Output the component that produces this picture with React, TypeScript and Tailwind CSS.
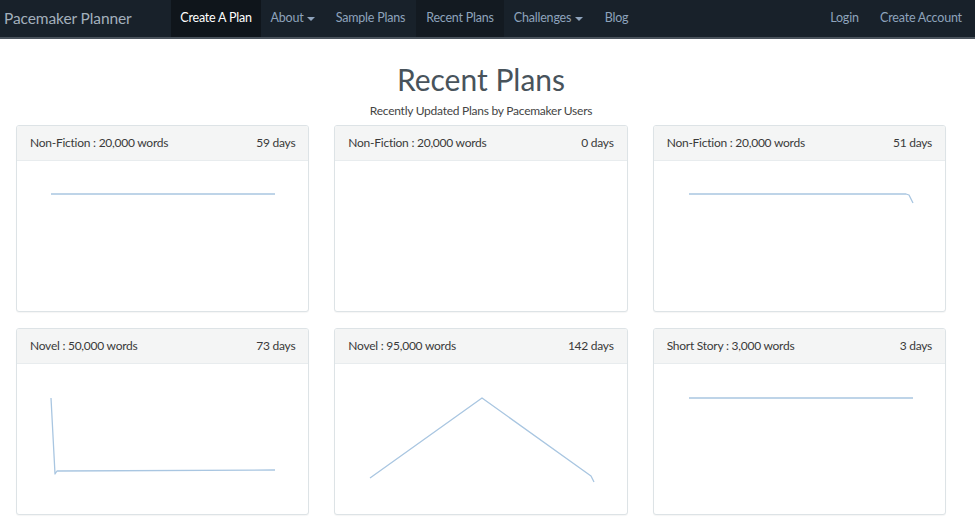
type Plan = {
  title: string;
  days: string;
  points: string;
};

const plans: Plan[] = [
  { title: 'Non-Fiction : 20,000 words', days: '59 days', points: '34,33 258,33' },
  { title: 'Non-Fiction : 20,000 words', days: '0 days', points: '' },
  { title: 'Non-Fiction : 20,000 words', days: '51 days', points: '35,33 252,33 255,34 259,42' },
  { title: 'Novel : 50,000 words', days: '73 days', points: '34,34 38,110 40,107 258,106' },
  { title: 'Novel : 95,000 words', days: '142 days', points: '35,114 147,34 256,112 259,118' },
  { title: 'Short Story : 3,000 words', days: '3 days', points: '35,34 259,34' },
];

function Caret() {
  return <span className="ml-[4px] inline-block border-x-[4px] border-t-[4px] border-x-transparent border-t-current align-middle" />;
}

function NavItem({
  label,
  width,
  active,
  current,
  caret,
}: {
  label: string;
  width: string;
  active?: boolean;
  current?: boolean;
  caret?: boolean;
}) {
  return (
    <a
      className={`flex h-full items-center justify-center ${width} ${
        active ? 'bg-[#0f151b] text-white' : current ? 'bg-[#131a21] text-[#8ea3bc]' : 'text-[#8ea3bc]'
      }`}
    >
      {label}
      {caret && <Caret />}
    </a>
  );
}

function PlanCard({ plan }: { plan: Plan }) {
  return (
    <div className="h-[187px] overflow-hidden rounded-[3px] border border-[#dde3e6] bg-white shadow-[0_1px_1px_rgba(0,0,0,0.04)]">
      <div className="flex h-[35px] items-center justify-between border-b border-[#e8ecee] bg-[#f4f5f5] px-[13px] text-[12px] tracking-[-0.25px] text-[#3a3a3a]">
        <span>{plan.title}</span>
        <span>{plan.days}</span>
      </div>
      <svg width="292" height="151" viewBox="0 0 292 151" className="block">
        {plan.points && (
          <polyline points={plan.points} fill="none" stroke="#a9c6e1" strokeWidth="1.3" strokeLinejoin="round" />
        )}
      </svg>
    </div>
  );
}

export default function App() {
  return (
    <div className="min-h-[525px] w-[975px] bg-white font-['Lato','Open_Sans',sans-serif]">
      {/* Navbar */}
      <nav className="flex h-[39px] items-stretch border-b-2 border-[#4a535c] bg-[#18212a] text-[12.5px] tracking-[-0.2px]">
        <a className="flex w-[171px] items-center pl-[4px] text-[15.5px] tracking-[-0.1px] text-[#a3b0bc]">Pacemaker Planner</a>
        <NavItem label="Create A Plan" width="w-[90px]" active />
        <NavItem label="About" width="w-[64px]" caret />
        <NavItem label="Sample Plans" width="w-[91px]" />
        <NavItem label="Recent Plans" width="w-[88px]" current />
        <NavItem label="Challenges" width="w-[89px]" caret />
        <NavItem label="Blog" width="w-[47px]" />
        <div className="ml-auto flex pr-[4px]">
          <NavItem label="Login" width="w-[53px]" />
          <NavItem label="Create Account" width="w-[100px]" />
        </div>
      </nav>

      {/* Heading */}
      <div className="w-[962px] pt-[22px] text-center">
        <h1 className="text-[30px] leading-[36px] text-[#48535b]">Recent Plans</h1>
        <p className="mt-[6px] text-[12px] leading-[16px] tracking-[-0.25px] text-[#444]">
          Recently Updated Plans by Pacemaker Users
        </p>
      </div>

      {/* Cards */}
      <div className="mt-[6px] grid w-[946px] grid-cols-3 gap-x-[25px] gap-y-[16px] pl-[16px]">
        {plans.map((p, i) => (
          <PlanCard key={i} plan={p} />
        ))}
      </div>
    </div>
  );
}
